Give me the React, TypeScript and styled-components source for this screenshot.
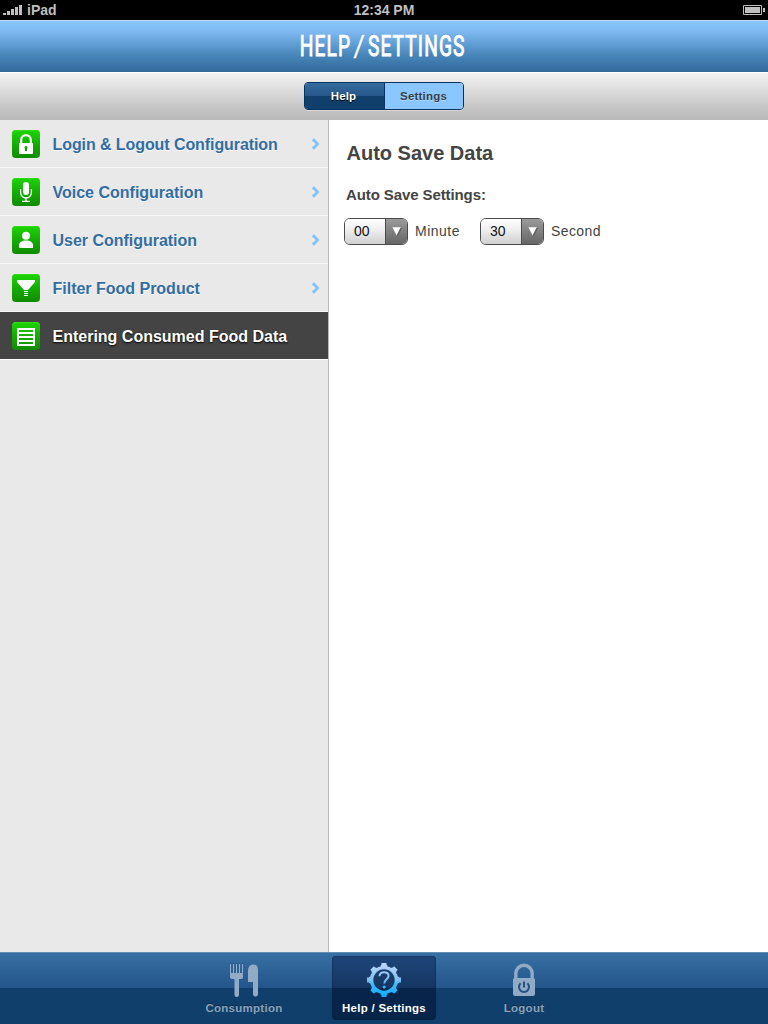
import React from 'react';
import styled, { createGlobalStyle } from 'styled-components';

const GlobalStyle = createGlobalStyle`
  * { box-sizing: border-box; }
  html, body { margin: 0; padding: 0; }
  body { font-family: "Liberation Sans", Arial, sans-serif; background: #fff; }
  svg { display: block; }
`;

const Screen = styled.div`
  width: 768px;
  height: 1024px;
  display: flex;
  flex-direction: column;
  overflow: hidden;
`;

const StatusBar = styled.div`
  height: 20px;
  flex: none;
  display: grid;
  grid-template-columns: 1fr auto 1fr;
  align-items: center;
  padding: 0 3px;
  background: #000;
  color: #bfbfbf;
  font-size: 14px;
  line-height: 20px;
  font-weight: bold;
`;

const Carrier = styled.div`
  display: flex;
  align-items: center;
  gap: 5px;
`;

const BatterySlot = styled.div`
  display: flex;
  justify-content: flex-end;
`;

const Header = styled.header`
  height: 52px;
  flex: none;
  display: flex;
  justify-content: center;
  border-top: 1px solid #b9dcfb;
  background: linear-gradient(#8ac6ff, #7cb8ef 22%, #5896cc 52%, #4785b8 68%, #336a9c);
`;

const Title = styled.h1`
  margin: 0;
  padding-right: 2px;
  width: 168px;
  display: flex;
  justify-content: center;
  white-space: nowrap;
  color: #fff;
  font: 400 29px/50px "Liberation Sans Narrow", "Roboto", sans-serif;
  -webkit-text-stroke: 1.1px #fff;
  text-shadow: 0 -1px 0 #1d78d6;
  letter-spacing: 1.7px;
  word-spacing: -3px;
`;

const TitleText = styled.span`
  transform: scaleX(0.66);
`;

const Slash = styled.span`
  display: inline-block;
  transform: skewX(-10deg);
`;

const SegmentBar = styled.div`
  height: 48px;
  flex: none;
  display: flex;
  justify-content: center;
  align-items: flex-start;
  padding-top: 9px;
  border-top: 1px solid #fff;
  background: linear-gradient(#f3f3f3, #dedede 35%, #c6c6c6 72%, #b9b9b9);
`;

const SegmentGroup = styled.div`
  display: flex;
  width: 160px;
  height: 28px;
  border: 1px solid #05335f;
  border-radius: 4px;
  overflow: hidden;
  box-shadow: 0 1px 0 rgba(255, 255, 255, 0.35);
`;

const Segment = styled.button<{ $pressed?: boolean }>`
  flex: 1;
  padding: 0 ${p => (p.$pressed ? 2 : 1)}px 0 0;
  border: 0;
  border-right: ${p => (p.$pressed ? '1px solid #05335f' : '0')};
  background: ${p => (p.$pressed ? 'linear-gradient(#356b9d, #27578a 50%, #113f6b 50%, #113f6b)' : '#8ac6ff')};
  color: ${p => (p.$pressed ? '#fff' : '#373f47')};
  text-shadow: ${p => (p.$pressed ? '0 1px 1px #000' : '0 1px 0 #b5dcff')};
  font: bold 11.5px "Liberation Sans", Arial, sans-serif;
  letter-spacing: 0.2px;
`;

const Body = styled.main`
  flex: 1;
  display: flex;
  min-height: 0;
`;

const Sidebar = styled.nav`
  width: 329px;
  flex: none;
  background: #e9e9e9;
  border-right: 1px solid #bbb;
`;

const Item = styled.div<{ $active?: boolean }>`
  height: 48px;
  display: flex;
  align-items: center;
  padding: 0 7px 0 12px;
  border-bottom: 1px solid ${p => (p.$active ? '#fff' : '#f8f8f8')};
  background: ${p => (p.$active ? '#444' : 'transparent')};
  color: ${p => (p.$active ? '#fff' : '#336da0')};
  text-shadow: ${p => (p.$active ? '0 1px 2px #000' : '0 1px 0 #fff')};
`;

const ItemLabel = styled.span<{ $spacing: number }>`
  flex: 1;
  margin-left: 12.5px;
  padding-top: 2px;
  font-size: 16px;
  font-weight: bold;
  line-height: 20px;
  white-space: nowrap;
  letter-spacing: ${p => p.$spacing}px;
`;

const Badge = styled.div`
  width: 28px;
  height: 28px;
  margin-top: 1px;
  border-radius: 4px;
  background: linear-gradient(#1fd507, #13ad02 50%, #118b00);
  box-shadow: inset 0 1px 0 #30de14;
`;

const Content = styled.section`
  flex: 1;
  padding: 21px 15px;
  color: #444;
`;

const Heading = styled.h2`
  margin: 0 0 0 2.5px;
  font-size: 20px;
  line-height: 24px;
`;

const SubHeading = styled.h3`
  margin: 20px 0 0 2px;
  font-size: 15px;
  line-height: 20px;
  letter-spacing: -0.1px;
`;

const Fields = styled.div`
  display: flex;
  align-items: center;
  margin-top: 13px;
`;

const Select = styled.div`
  display: flex;
  width: 64px;
  height: 27px;
  border: 1px solid #4b4b4b;
  border-radius: 6px;
  overflow: hidden;
`;

const SelectValue = styled.div`
  width: 40px;
  padding-left: 9px;
  color: #111;
  font-size: 14px;
  line-height: 25px;
  background: linear-gradient(#fff, #f0f0f0 40%, #d0d0d0);
`;

const SelectArrow = styled.div`
  flex: 1;
  display: flex;
  align-items: center;
  justify-content: center;
  border-left: 1px solid #4b4b4b;
  background: linear-gradient(#9b9b9b, #666);
`;

const Unit = styled.span<{ $spacing: number }>`
  width: 65px;
  margin-left: 7px;
  font-size: 14px;
  line-height: 25px;
  padding-bottom: 1px;
  letter-spacing: ${p => p.$spacing}px;
  white-space: nowrap;
`;

const TabBar = styled.footer`
  height: 72px;
  flex: none;
  display: flex;
  justify-content: center;
  gap: 36px;
  padding-top: 3px;
  border-top: 1px solid #5f8db6;
  background: linear-gradient(#386fa2, #23558a 49%, #113f6b 49%, #113f6b);
`;

const Tab = styled.div<{ $active?: boolean }>`
  width: 104px;
  height: 64px;
  display: flex;
  flex-direction: column;
  align-items: center;
  padding-top: 6px;
  border-radius: 4px;
  color: ${p => (p.$active ? '#fff' : '#8ba3bb')};
  background: ${p => (p.$active ? 'linear-gradient(#1e467b, #153661 50%, #07244a 50%, #07244a)' : 'none')};
  box-shadow: ${p => (p.$active ? 'inset 0 0 2px #061d3d' : 'none')};
  text-shadow: 0 -1px 0 #082748;
`;

const TabLabel = styled.span`
  margin-top: 2px;
  font-size: 11.5px;
  font-weight: bold;
  line-height: 16px;
  white-space: nowrap;
  letter-spacing: 0.27px;
`;

const SignalIcon = () => (
  <svg width="19" height="10" fill="#bfbfbf">
    <path d="M0 8h3v2H0zM4 6h3v4H4zM8 4h3v6H8zM12 2h3v8h-3zM16 0h3v10h-3z" />
  </svg>
);

const BatteryIcon = () => (
  <svg width="22" height="10">
    <path d="M.5.5h18v9H.5z" fill="none" stroke="#bfbfbf" />
    <path d="M2 2h15v6H2zM20 3h2v4h-2z" fill="#bfbfbf" />
  </svg>
);

const Chevron = () => (
  <svg width="10" height="12" viewBox="0 0 10 12">
    <path d="M1.8 1.3L6.6 6 1.8 10.700" fill="none" stroke="#82c2fd" strokeWidth="2.8" />
  </svg>
);

const LockGlyph = () => (
  <svg width="28" height="28" fill="#fff">
    <path d="M9.2 14V10a4.8 4.8 0 0 1 9.6 0V14" fill="none" stroke="#fff" strokeWidth="2.2" />
    <path fillRule="evenodd" d="M8 13h12a1 1 0 0 1 1 1v9a1 1 0 0 1-1 1H8a1 1 0 0 1-1-1v-9a1 1 0 0 1 1-1zM14 16a1.5 1.5 0 0 0-1 2.6V21h2v-2.4a1.5 1.5 0 0 0-1-2.6z" />
  </svg>
);

const MicGlyph = () => (
  <svg width="28" height="28">
    <rect x="11" y="4" width="6" height="13" rx="3" fill="#fff" />
    <path d="M8.6 11v3.6a5.4 5.4 0 0 0 10.8 0V11M14 20v3M10 23.4h8" fill="none" stroke="#fff" strokeWidth="1.3" />
  </svg>
);

const UserGlyph = () => (
  <svg width="28" height="28" fill="#fff">
    <circle cx="14" cy="9.8" r="4" />
    <path d="M7 22v-2.500c0-3.500 3-5 7-5s7 1.500 7 5V22z" />
  </svg>
);

const FunnelGlyph = () => (
  <svg width="28" height="28" fill="#fff">
    <path d="M5 6h18v2l-7 8h-4L5 8zM12 17h4v1h-4zM12 19h4v1h-4zM12 21h4v1h-4z" />
  </svg>
);

const ListGlyph = () => (
  <svg width="28" height="28">
    <path d="M6 7h16v16H6zM7 11h14M7 15h14M7 19h14" fill="none" stroke="#fff" strokeWidth="2" />
  </svg>
);

const ArrowGlyph = () => (
  <svg width="12" height="12">
    <path d="M2.500 2h8.500l-4.200 8.500z" fill="#333" opacity=".45" />
    <path d="M1.500 1.300h8.200L5.600 9.500z" fill="#fff" />
  </svg>
);

const CutleryIcon = () => (
  <svg width="36" height="36" viewBox="0 0 36 36">
    <path d="M4 1.500h1v8H4zM7 1.500h1v8H7zM10 1.500h1v8h-1zM13 1.500h1v8h-1zM16 1.500h1v8h-1z" fill="#082d54" opacity=".7" />
    <path d="M4 2h1v9h2V2h1v9h2V2h1v9h2V2h1v9h2V2h1v13q0 2-2 2h-2v16a2.250 2 0 0 1-4.500 0V17H6q-2 0-2-2z" fill="#91abc6" />
    <path d="M22 20V9c0-4 2-6.500 5.500-6.500S32 5 32 8v24a2.500 2.500 0 0 1-5 0V20z" fill="#91abc6" />
  </svg>
);

const GearIcon = () => (
  <svg width="36" height="36" viewBox="-18 -18 36 36">
    <defs>
      <linearGradient id="gear" gradientUnits="userSpaceOnUse" x1="0" y1="-17" x2="0" y2="17">
        <stop offset="0" stopColor="#c0d9fa" />
        <stop offset=".5" stopColor="#7ebff1" />
        <stop offset=".65" stopColor="#3bb9fb" />
        <stop offset="1" stopColor="#10aaff" />
      </linearGradient>
    </defs>
    <g stroke="url(#gear)" fill="none">
      <circle r="12.400" strokeWidth="3.400" />
      <path
        d="M-.01-13V-17M0 13V17M13 0H17M-13 .01H-17M9-9l2.900-2.900M-9-9l-2.900-2.900M9 9l2.900 2.900M-9 9l-2.900 2.900"
        strokeWidth="5"
      />
      <path
        d="M-.01-13V-15M0 13V15M13 0H15M-13 .01H-15M9-9l1.500-1.500M-9-9l-1.500-1.500M9 9l1.500 1.500M-9 9l-1.500 1.500"
        strokeWidth="6.500"
      />
      <path d="M-4.500-3.800C-4.500-9.300 4.900-9 4.600-4.100 4.400-.8.300-.5.300 3.600" strokeWidth="2" />
    </g>
    <circle cx=".2" cy="7.100" r="1.600" fill="#2cb5fd" />
  </svg>
);

const LogoutIcon = () => (
  <svg width="36" height="36" viewBox="0 0 36 36">
    <path d="M9.800 17V11.500a8.200 8.200 0 0 1 16.400 0V17" fill="none" stroke="#91abc6" strokeWidth="3.400" />
    <rect x="7" y="16" width="22" height="18" rx="2" fill="#91abc6" />
    <path d="M14.600 21.300a5 5 0 1 0 6.800 0M18 19.500v6" fill="none" stroke="#23517f" strokeWidth="2" />
  </svg>
);

const items = [
  { label: 'Login & Logout Configuration', glyph: <LockGlyph />, spacing: -0.08 },
  { label: 'Voice Configuration', glyph: <MicGlyph />, spacing: 0 },
  { label: 'User Configuration', glyph: <UserGlyph />, spacing: -0.02 },
  { label: 'Filter Food Product', glyph: <FunnelGlyph />, spacing: -0.01 },
  { label: 'Entering Consumed Food Data', glyph: <ListGlyph />, spacing: 0, active: true },
];

const NumberSelect = ({ value }: { value: string }) => (
  <Select>
    <SelectValue>{value}</SelectValue>
    <SelectArrow><ArrowGlyph /></SelectArrow>
  </Select>
);

export default function App() {
  return (
    <Screen>
      <GlobalStyle />
      <StatusBar>
        <Carrier><SignalIcon />iPad</Carrier>
        <span>12:34 PM</span>
        <BatterySlot><BatteryIcon /></BatterySlot>
      </StatusBar>
      <Header>
        <Title><TitleText>HELP <Slash>/</Slash> SETTINGS</TitleText></Title>
      </Header>
      <SegmentBar>
        <SegmentGroup>
          <Segment $pressed>Help</Segment>
          <Segment>Settings</Segment>
        </SegmentGroup>
      </SegmentBar>
      <Body>
        <Sidebar>
          {items.map(item => (
            <Item key={item.label} $active={item.active}>
              <Badge>{item.glyph}</Badge>
              <ItemLabel $spacing={item.spacing}>{item.label}</ItemLabel>
              {!item.active && <Chevron />}
            </Item>
          ))}
        </Sidebar>
        <Content>
          <Heading>Auto Save Data</Heading>
          <SubHeading>Auto Save Settings:</SubHeading>
          <Fields>
            <NumberSelect value="00" />
            <Unit $spacing={0.5}>Minute</Unit>
            <NumberSelect value="30" />
            <Unit $spacing={0.4}>Second</Unit>
          </Fields>
        </Content>
      </Body>
      <TabBar>
        <Tab><CutleryIcon /><TabLabel>Consumption</TabLabel></Tab>
        <Tab $active><GearIcon /><TabLabel>Help / Settings</TabLabel></Tab>
        <Tab><LogoutIcon /><TabLabel>Logout</TabLabel></Tab>
      </TabBar>
    </Screen>
  );
}
